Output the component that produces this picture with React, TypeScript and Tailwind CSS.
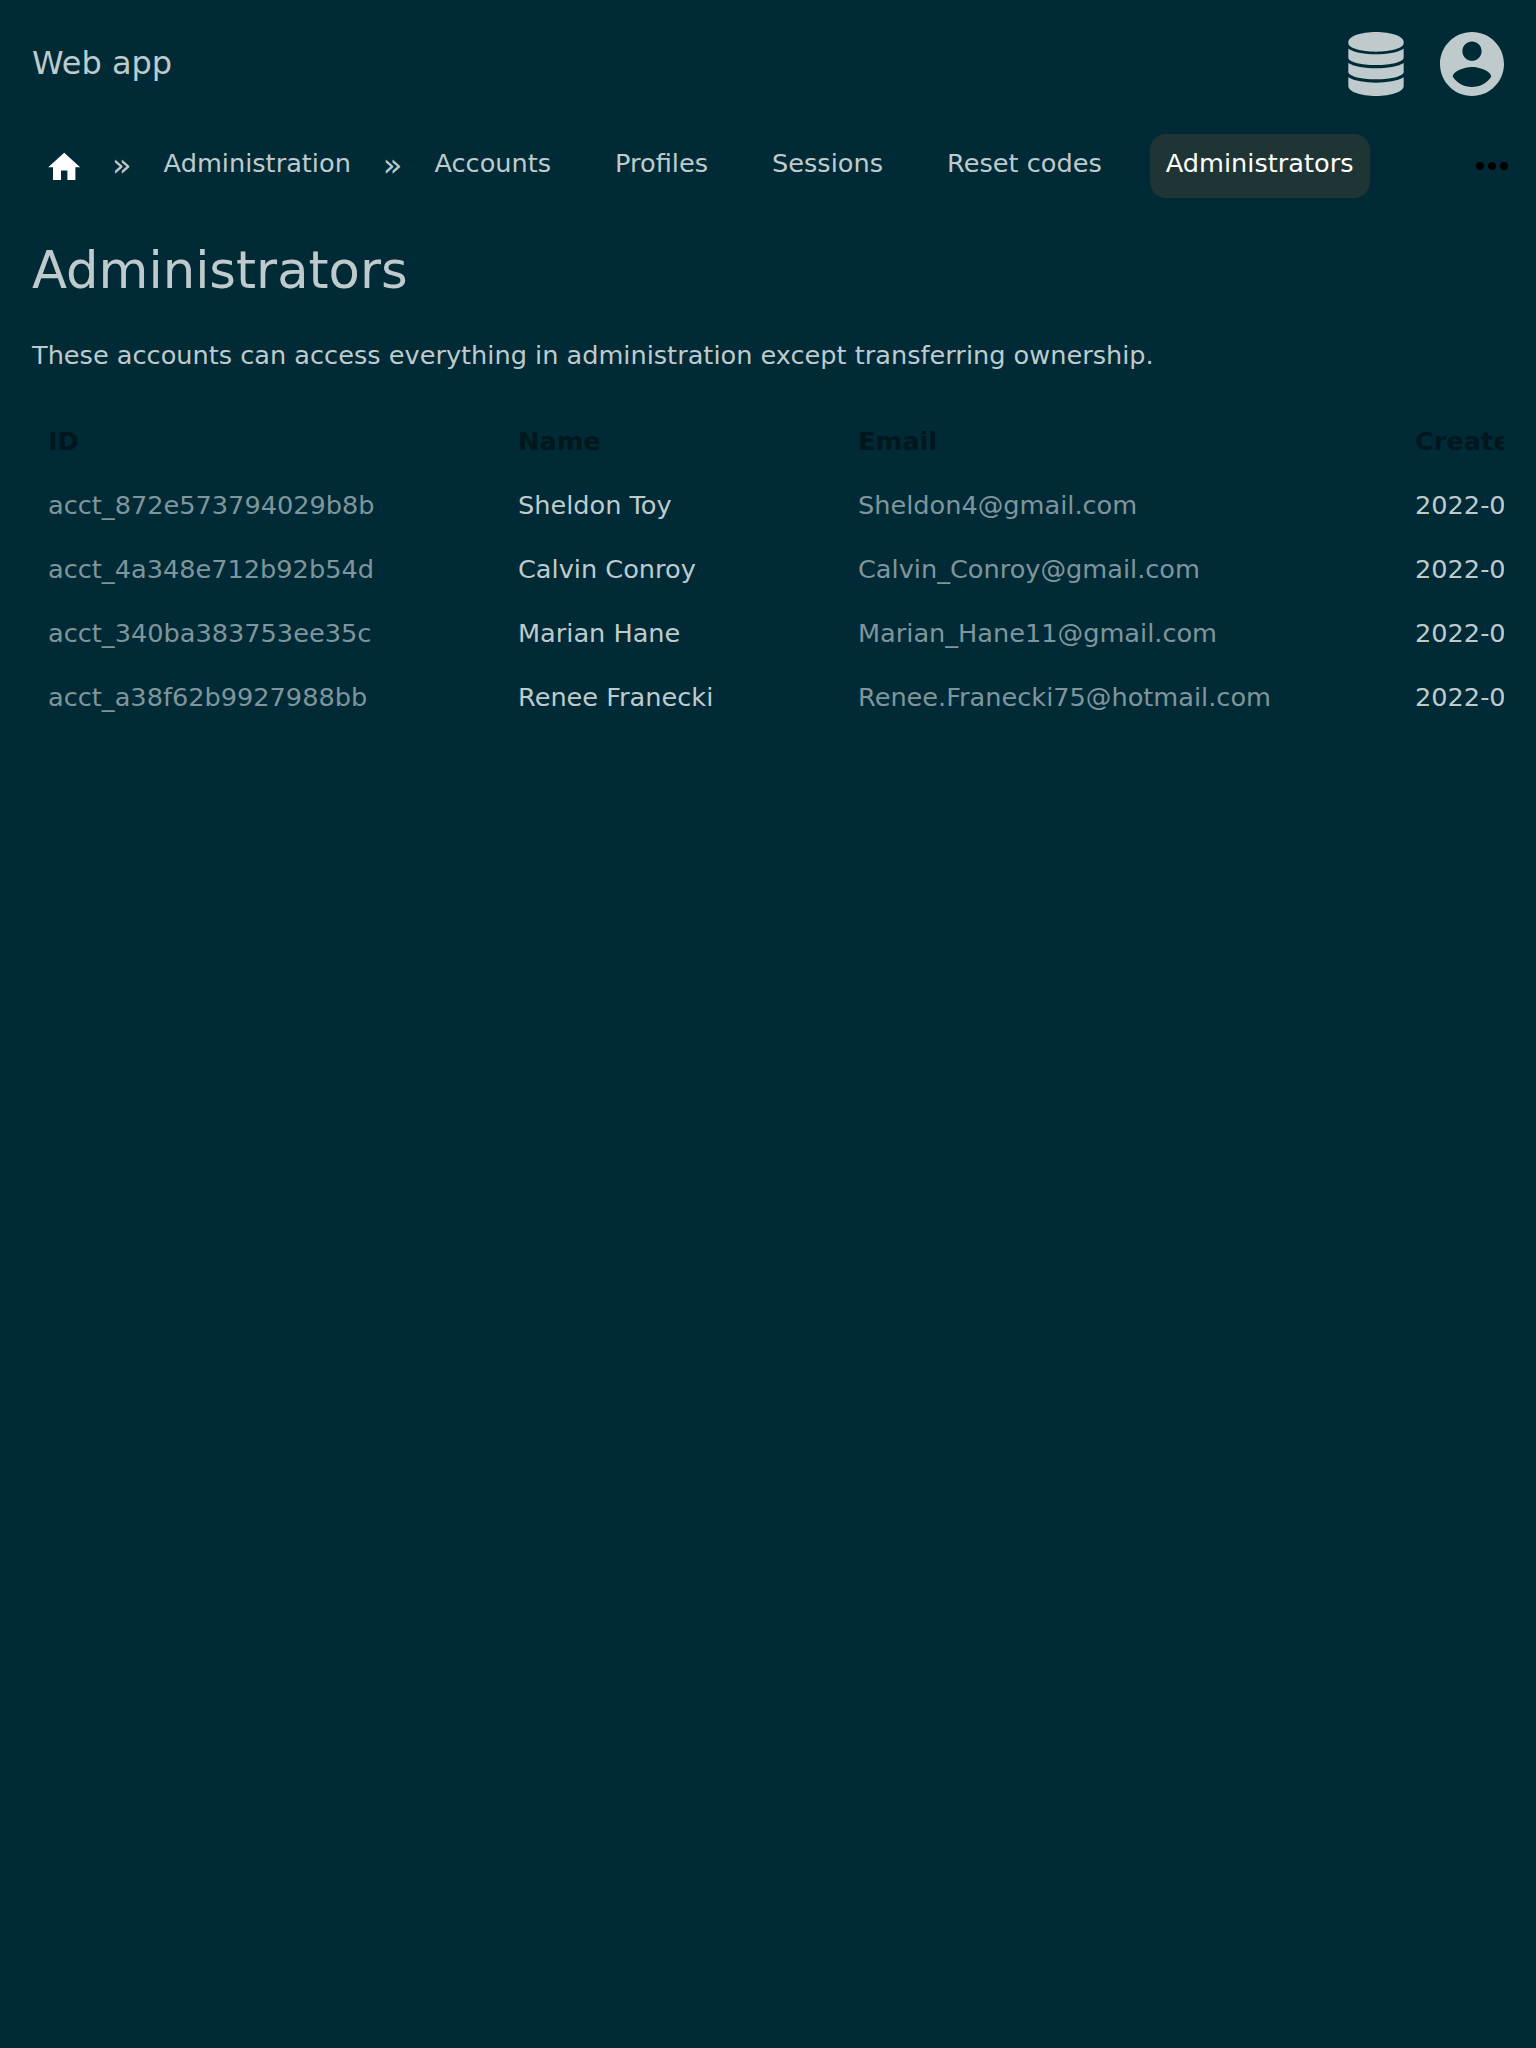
const rows = [
  ["acct_872e573794029b8b", "Sheldon Toy", "Sheldon4@gmail.com", "2022-0"],
  ["acct_4a348e712b92b54d", "Calvin Conroy", "Calvin_Conroy@gmail.com", "2022-0"],
  ["acct_340ba383753ee35c", "Marian Hane", "Marian_Hane11@gmail.com", "2022-0"],
  ["acct_a38f62b9927988bb", "Renee Franecki", "Renee.Franecki75@hotmail.com", "2022-0"],
];
const tabs = ["Accounts", "Profiles", "Sessions", "Reset codes"];

export default function App() {
  return (
    <div className="h-[2048px] w-full overflow-hidden bg-[#002b36] px-8 font-['DejaVu_Sans',sans-serif] text-[25.6px] leading-8 text-[#bfcacd]">
      <header className="flex h-32 items-start pt-8">
        <div className="grow text-[32px] leading-[62px]">Web app</div>
        <svg className="mr-9 h-16 w-14" viewBox="0 0 168 192" fill="currentColor">
          <path d="M1 30C1 13 38 0 84 0s83 13 83 30v4c0 14-37 25-83 25S1 48 1 34z" />
          <path d="M1 50c18 11 50 17 83 17s65-6 83-17v27c0 12-37 22-83 22S1 89 1 77z" />
          <path d="M1 93c18 11 50 16 83 16s65-5 83-16v27c0 12-37 22-83 22S1 132 1 120z" />
          <path d="M1 136c18 11 50 16 83 16s65-5 83-16v26c0 17-37 30-83 30S1 179 1 162z" />
        </svg>
        <svg className="h-16 w-16" viewBox="2 2 20 20" fill="currentColor">
          <path d="M12 2C6.48 2 2 6.48 2 12s4.48 10 10 10 10-4.48 10-10S17.52 2 12 2zm0 3c1.66 0 3 1.34 3 3s-1.34 3-3 3-3-1.34-3-3 1.34-3 3-3zm0 14.2c-2.5 0-4.71-1.28-6-3.22.03-1.99 4-3.08 6-3.08 1.99 0 5.97 1.09 6 3.08-1.29 1.94-3.5 3.22-6 3.22z" />
        </svg>
      </header>
      <nav className="mt-1.5 flex h-16 items-start">
        <div className="flex h-[66px] w-16 items-center justify-center text-white">
          <svg className="h-[38.4px] w-[38.4px]" viewBox="0 0 24 24" fill="currentColor"><path d="M10 20v-6h4v6h5v-8h3L12 3 2 12h3v8z" /></svg>
        </div>
        <span className="px-4 text-[32px] leading-[62px]">»</span>
        <a className="px-4 leading-[58px]">Administration</a>
        <span className="px-4 text-[32px] leading-[62px]">»</span>
        {tabs.map((t) => <a key={t} className="mr-8 px-4 leading-[58px]">{t}</a>)}
        <a className="h-16 rounded-2xl bg-[#1f3535] px-4 leading-[58px] text-white">Administrators</a>
        <svg className="-mr-3 ml-auto mt-2 h-12 w-12 text-black" viewBox="0 0 24 24" fill="currentColor">
          <circle cx="6" cy="12" r="2" /><circle cx="12" cy="12" r="2" /><circle cx="18" cy="12" r="2" />
        </svg>
      </nav>
      <h1 className="mt-10 text-[51.2px] leading-[64px]">Administrators</h1>
      <p className="mt-[37px]">These accounts can access everything in administration except transferring ownership.</p>
      <div className="mt-[38px] overflow-hidden">
        <table className="w-[1530px] table-fixed border-collapse text-left">
          <colgroup><col className="w-[470px]" /><col className="w-[340px]" /><col className="w-[557px]" /><col /></colgroup>
          <thead><tr className="h-16 text-[#00171d]">{["ID", "Name", "Email", "Created"].map((t) => <th key={t} className="px-4 font-bold">{t}</th>)}</tr></thead>
          <tbody>{rows.map((r) => <tr key={r[0]} className="h-16">{r.map((c, i) => <td key={i} className={i % 2 ? "px-4" : "px-4 text-[#80959b]"}>{c}</td>)}</tr>)}</tbody>
        </table>
      </div>
    </div>
  );
}
